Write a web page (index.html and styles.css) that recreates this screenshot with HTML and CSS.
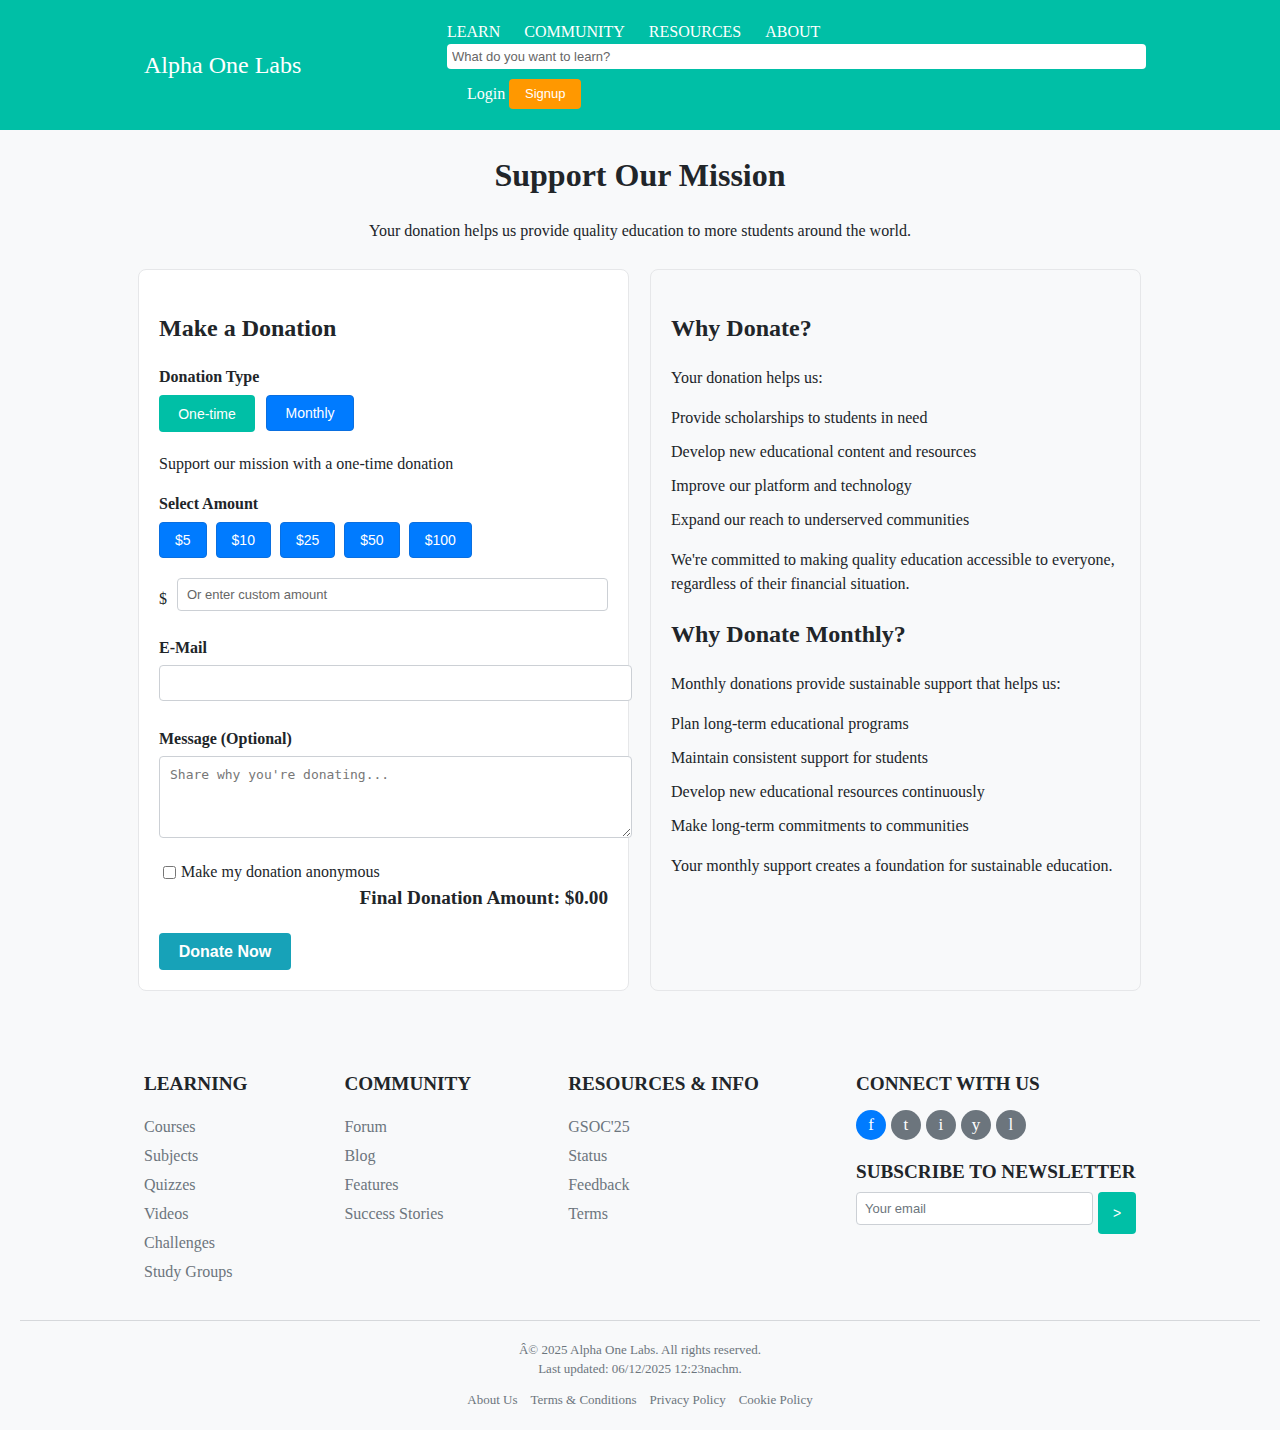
FILE: index.html
```html
<!DOCTYPE html>
<html lang="en">
<head>
<meta charset="utf-8">
<title>Support Our Mission - Alpha One Labs</title>
<link rel="stylesheet" href="styles.css">
</head>
<body>
<header class="site-header">
  <div class="header-inner">
    <a class="logo" href="#">Alpha One Labs</a>
    <div class="header-right">
      <nav class="main-nav">
        <a href="#">LEARN</a>
        <a href="#">COMMUNITY</a>
        <a href="#">RESOURCES</a>
        <a href="#">ABOUT</a>
      </nav>
      <input class="search" type="text" placeholder="What do you want to learn?">
      <div class="auth">
        <a class="login" href="#">Login</a>
        <a class="signup" href="#">Signup</a>
      </div>
    </div>
  </div>
</header>

<main class="main">
  <h1 class="page-title">Support Our Mission</h1>
  <p class="page-sub">Your donation helps us provide quality education to more students around the world.</p>

  <div class="cards">
    <section class="card card-form">
      <h2 class="card-title">Make a Donation</h2>
      <div class="label lbl-type">Donation Type</div>
      <div class="type-row">
        <button class="btn btn-teal btn-type">One-time</button>
        <button class="btn btn-blue btn-type btn-monthly">Monthly</button>
      </div>
      <p class="type-desc">Support our mission with a one-time donation</p>
      <div class="label lbl-amount">Select Amount</div>
      <div class="amount-row">
        <button class="btn btn-blue btn-amt">$5</button>
        <button class="btn btn-blue btn-amt">$10</button>
        <button class="btn btn-blue btn-amt">$25</button>
        <button class="btn btn-blue btn-amt">$50</button>
        <button class="btn btn-blue btn-amt">$100</button>
      </div>
      <div class="custom-row">
        <span class="dollar">$</span>
        <input class="custom-input" type="text" placeholder="Or enter custom amount">
      </div>
      <div class="label lbl-email">E-Mail</div>
      <input class="email-input" type="email">
      <div class="label lbl-msg">Message (Optional)</div>
      <textarea class="msg-input" placeholder="Share why you're donating..."></textarea>
      <label class="anon-row"><input type="checkbox" class="anon-check"> Make my donation anonymous</label>
      <div class="final">Final Donation Amount: $0.00</div>
      <button class="btn donate-btn">Donate Now</button>
    </section>

    <section class="card card-info">
      <h2 class="card-title">Why Donate?</h2>
      <p class="intro">Your donation helps us:</p>
      <ul class="reasons">
        <li>Provide scholarships to students in need</li>
        <li>Develop new educational content and resources</li>
        <li>Improve our platform and technology</li>
        <li>Expand our reach to underserved communities</li>
      </ul>
      <p class="outro">We're committed to making quality education accessible to everyone, regardless of their financial situation.</p>
      <h2 class="card-title second">Why Donate Monthly?</h2>
      <p class="intro">Monthly donations provide sustainable support that helps us:</p>
      <ul class="reasons">
        <li>Plan long-term educational programs</li>
        <li>Maintain consistent support for students</li>
        <li>Develop new educational resources continuously</li>
        <li>Make long-term commitments to communities</li>
      </ul>
      <p class="outro">Your monthly support creates a foundation for sustainable education.</p>
    </section>
  </div>
</main>

<footer class="site-footer">
  <div class="footer-cols">
    <div class="fcol">
      <h3 class="fhead">LEARNING</h3>
      <ul class="flinks">
        <li><a href="#">Courses</a></li>
        <li><a href="#">Subjects</a></li>
        <li><a href="#">Quizzes</a></li>
        <li><a href="#">Videos</a></li>
        <li><a href="#">Challenges</a></li>
        <li><a href="#">Study Groups</a></li>
      </ul>
    </div>
    <div class="fcol">
      <h3 class="fhead">COMMUNITY</h3>
      <ul class="flinks">
        <li><a href="#">Forum</a></li>
        <li><a href="#">Blog</a></li>
        <li><a href="#">Features</a></li>
        <li><a href="#">Success Stories</a></li>
      </ul>
    </div>
    <div class="fcol">
      <h3 class="fhead">RESOURCES &amp; INFO</h3>
      <ul class="flinks">
        <li><a href="#">GSOC'25</a></li>
        <li><a href="#">Status</a></li>
        <li><a href="#">Feedback</a></li>
        <li><a href="#">Terms</a></li>
      </ul>
    </div>
    <div class="fcol">
      <h3 class="fhead">CONNECT WITH US</h3>
      <div class="socials">
        <a class="soc soc-blue" href="#">f</a>
        <a class="soc" href="#">t</a>
        <a class="soc" href="#">i</a>
        <a class="soc" href="#">y</a>
        <a class="soc" href="#">l</a>
      </div>
      <h3 class="fhead sub-head">SUBSCRIBE TO NEWSLETTER</h3>
      <div class="sub-row">
        <input class="sub-input" type="email" placeholder="Your email">
        <button class="sub-btn">&gt;</button>
      </div>
    </div>
  </div>
  <hr class="fline">
  <div class="copy">Â© 2025 Alpha One Labs. All rights reserved.<br>Last updated: 06/12/2025 12:23nachm.</div>
  <div class="legal">
    <a href="#">About Us</a>
    <a href="#">Terms &amp; Conditions</a>
    <a href="#">Privacy Policy</a>
    <a href="#">Cookie Policy</a>
  </div>
</footer>
</body>
</html>
```

FILE: styles.css
```css
* { box-sizing: border-box; }
html, body { margin: 0; padding: 0; }
body {
  font-family: "Liberation Serif", "Times New Roman", serif;
  font-size: 16px;
  color: #212529;
  background: #f8f9fa;
}
a { text-decoration: none; color: inherit; }

/* Header */
.site-header {
  background: #00bfa6;
  height: 130px;
}
.header-inner {
  height: 130px;
  display: flex;
  align-items: center;
  padding-left: 144px;
}
.logo {
  color: #fff;
  font-size: 24px;
  width: 303px;
}
.header-right {
  width: 699px;
  display: flex;
  flex-direction: column;
}
.main-nav {
  display: flex;
  gap: 24px;
  line-height: 20px;
}
.main-nav a { color: #fff; font-size: 16px; }
.search {
  margin-top: 2px;
  height: 25px;
  border: none;
  border-radius: 4px;
  padding: 0 5px;
  font-family: "Liberation Sans", Arial, sans-serif;
  font-size: 13px;
  background: #fff;
  color: #333;
}
.search::placeholder { color: #666; }
.auth {
  margin-top: 10px;
  display: flex;
  align-items: center;
  padding-left: 20px;
}
.login { color: #fff; font-size: 16px; margin-right: 4px; }
.signup {
  background: #ff9800;
  color: #fff;
  font-family: "Liberation Sans", Arial, sans-serif;
  font-size: 13px;
  width: 72px;
  height: 30px;
  border-radius: 4px;
  display: flex;
  align-items: center;
  justify-content: center;
}

/* Main */
.main {
  width: 1004px;
  margin: 0 auto;
  padding-top: 26px;
}
.page-title {
  margin: 0;
  text-align: center;
  font-size: 32px;
  line-height: 38px;
  font-weight: bold;
}
.page-sub {
  margin: 25px 0 0;
  text-align: center;
  line-height: 24px;
}
.cards {
  margin-top: 26px;
  display: grid;
  grid-template-columns: 491px 491px;
  gap: 21px;
  align-items: stretch;
}
.card {
  border: 1px solid #e6e7e9;
  border-radius: 8px;
  padding: 20px;
}
.card-form { background: #fff; }
.card-info { background: #f8f9fa; }
.card-title {
  margin: 24px 0 0;
  font-size: 24px;
  line-height: 29px;
  font-weight: bold;
}
.label {
  font-weight: bold;
  line-height: 24px;
}
.lbl-type { margin-top: 22px; }
.btn {
  border: none;
  border-radius: 4px;
  color: #fff;
  font-family: "Liberation Sans", Arial, sans-serif;
  font-size: 14px;
  cursor: pointer;
  padding: 0;
}
.btn-teal { background: #00bfa6; }
.btn-blue { background: #007bff; border: 1px solid #0a6fe0; }
.type-row { display: flex; gap: 11px; margin-top: 6px; }
.btn-type { height: 37px; width: 96px; }
.btn-monthly { width: 88px; height: 36px; }
.type-desc { margin: 20px 0 0; line-height: 24px; }
.lbl-amount { margin-top: 16px; }
.amount-row { display: flex; gap: 9px; margin-top: 6px; }
.btn-amt { height: 36px; min-width: 46px; padding: 0 15px; }
.custom-row {
  display: flex;
  align-items: flex-start;
  margin-top: 20px;
}
.dollar { width: 18px; padding-top: 12px; line-height: 18px; }
.custom-input {
  width: 432px;
  height: 33px;
  border: 1px solid #ccd0d5;
  border-radius: 4px;
  padding: 0 9px;
  font-family: "Liberation Sans", Arial, sans-serif;
  font-size: 13px;
  background: #fff;
}
.custom-input::placeholder { color: #666; }
.lbl-email { margin-top: 25px; }
.email-input {
  display: block;
  margin-top: 5px;
  width: 473px;
  height: 36px;
  border: 1px solid #ccd0d5;
  border-radius: 4px;
  background: #fff;
}
.lbl-msg { margin-top: 26px; }
.msg-input {
  display: block;
  margin-top: 5px;
  width: 473px;
  height: 82px;
  border: 1px solid #ccd0d5;
  border-radius: 4px;
  padding: 10px 10px;
  font-family: "DejaVu Sans Mono", "Liberation Mono", monospace;
  font-size: 13px;
  background: #fff;
}
.msg-input::placeholder { color: #777; }
.anon-row {
  display: flex;
  align-items: center;
  margin-top: 22px;
  line-height: 24px;
  padding-left: 4px;
}
.anon-check { width: 13px; height: 13px; margin: 0 5px 0 0; }
.final {
  margin-top: 2px;
  text-align: right;
  font-weight: bold;
  font-size: 19.2px;
  line-height: 24px;
}
.donate-btn {
  margin-top: 23px;
  display: block;
  width: 132px;
  height: 37px;
  background: #17a2b8;
  font-weight: bold;
  font-size: 16px;
}

.intro { margin: 23px 0 0; line-height: 24px; }
.reasons { list-style: none; margin: 0; padding: 6px 0 0; }
.reasons li { margin-top: 10px; line-height: 24px; }
.outro { margin: 16px 0 0; line-height: 24px; }
.card-title.second { margin-top: 24px; }

/* Footer */
.site-footer {
  padding-top: 81px;
  padding-bottom: 18px;
}
.footer-cols {
  width: 992px;
  margin: 0 auto;
  display: flex;
  justify-content: space-between;
}
.fhead {
  margin: 0;
  font-size: 19.2px;
  line-height: 23px;
  font-weight: bold;
}
.flinks { list-style: none; margin: 22px 0 0; padding: 0; }
.flinks li { line-height: 19px; margin-bottom: 10px; }
.flinks a { color: #6c757d; }
.socials { display: flex; gap: 5px; margin-top: 15px; }
.soc {
  width: 30px;
  height: 30px;
  border-radius: 50%;
  background: #6c757d;
  color: #fff;
  display: flex;
  align-items: center;
  justify-content: center;
  font-size: 17px;
}
.soc-blue { background: #007bff; }
.sub-head { margin-top: 20px; }
.sub-row { display: flex; gap: 5px; margin-top: 9px; align-items: flex-start; }
.sub-input {
  width: 237px;
  height: 33px;
  border: 1px solid #ccd0d5;
  border-radius: 4px;
  padding: 0 8px;
  font-family: "Liberation Sans", Arial, sans-serif;
  font-size: 13px;
  background: #fff;
}
.sub-input::placeholder { color: #6c757d; }
.sub-btn {
  width: 38px;
  height: 42px;
  border: none;
  border-radius: 4px;
  background: #00bfa6;
  color: #fff;
  font-family: "Liberation Sans", Arial, sans-serif;
  font-size: 14px;
  padding: 0;
}
.fline {
  margin: 29px 20px 0;
  border: none;
  border-top: 1px solid #d6d8db;
}
.copy {
  margin-top: 19px;
  text-align: center;
  font-size: 13px;
  line-height: 19px;
  color: #6c757d;
}
.legal {
  margin-top: 12px;
  display: flex;
  justify-content: center;
  gap: 13px;
  font-size: 13px;
  line-height: 19px;
}
.legal a { color: #6c757d; }
```
